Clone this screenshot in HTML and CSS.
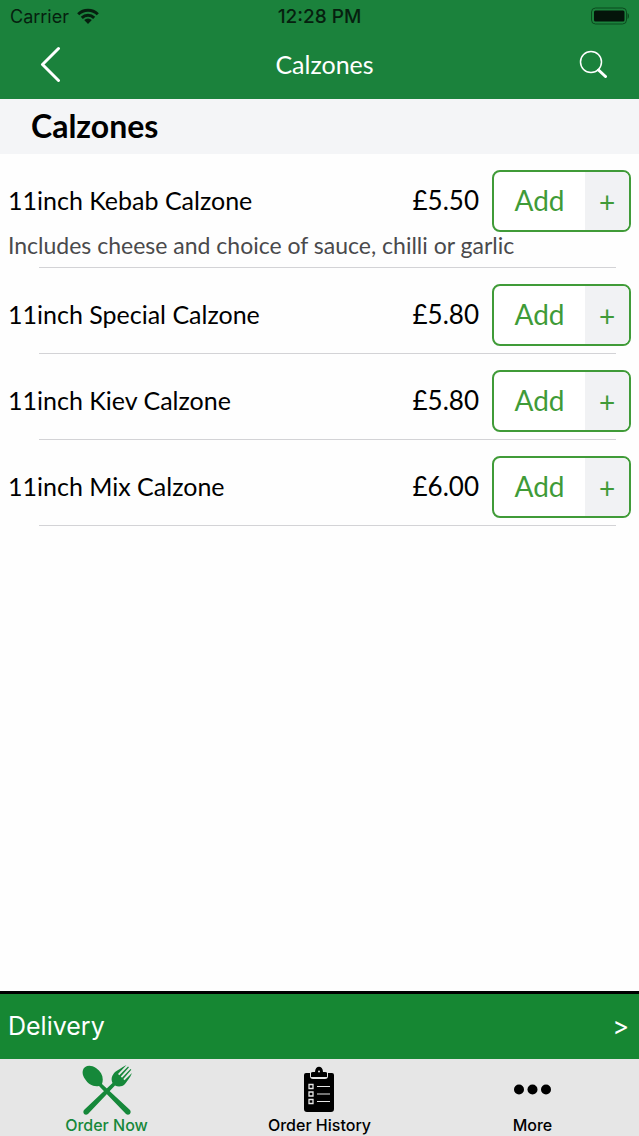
FILE: index.html
```
<!DOCTYPE html>
<html lang="en">

<head>
  <meta charset="UTF-8">
  <meta name="viewport" content="width=device-width, initial-scale=1.0">
  <title>Calzones</title>

  <link rel="stylesheet" href="styles.css">
</head>

<body>

  <header class="top">
    <div class="status">
      <span class="carrier">
        Carrier
        <svg width="22" height="16" viewBox="0 0 22 16" aria-hidden="true">
          <g fill="none" stroke="currentColor" stroke-width="3">
            <path d="M1.2 6.2a14 14 0 0 1 19.6 0" />
            <path d="M4.8 9.8a9 9 0 0 1 12.4 0" />
          </g>
          <path d="M7.2 12a5.5 5.5 0 0 1 7.6 0L11 16z" fill="currentColor" />
        </svg>
      </span>
      <time class="clock">12:28 PM</time>
      <svg class="battery" width="40" height="18" viewBox="0 0 40 18" aria-hidden="true">
        <rect x="2.500" y="1" width="35" height="16" rx="4" fill="none" stroke="#0b4a1e" />
        <rect x="5" y="3.500" width="30.500" height="11" rx="1.500" fill="#04140a" />
        <path d="M38.500 6c2 1 2 5 0 6z" fill="#0b4a1e" />
      </svg>
    </div>

    <nav class="navbar">
      <button class="icon-button" type="button" aria-label="Back">
        <svg width="22" height="36" viewBox="0 0 22 36">
          <path d="M18.500 2.500L2.500 18.500l16 16" fill="none" stroke="#fff" stroke-width="3" stroke-linecap="round" stroke-linejoin="round" />
        </svg>
      </button>
      <span class="title">Calzones</span>
      <button class="icon-button" type="button" aria-label="Search">
        <svg width="28" height="28" viewBox="0 0 28 28">
          <circle cx="12" cy="12" r="10.500" fill="none" stroke="#fff" stroke-width="1.500" />
          <path d="M19.500 20l7 6.500" stroke="#fff" stroke-width="3" stroke-linecap="round" />
        </svg>
      </button>
    </nav>
  </header>

  <main>
    <h1>Calzones</h1>

    <ul class="menu">
      <li>
        <div class="item">
          <span class="name">11inch Kebab Calzone</span>
          <span class="price">£5.50</span>
          <button class="add" type="button"><span>Add</span><span class="plus">+</span></button>
        </div>
        <p>Includes cheese and choice of sauce, chilli or garlic</p>
      </li>
      <li>
        <div class="item">
          <span class="name">11inch Special Calzone</span>
          <span class="price">£5.80</span>
          <button class="add" type="button"><span>Add</span><span class="plus">+</span></button>
        </div>
      </li>
      <li>
        <div class="item">
          <span class="name">11inch Kiev Calzone</span>
          <span class="price">£5.80</span>
          <button class="add" type="button"><span>Add</span><span class="plus">+</span></button>
        </div>
      </li>
      <li>
        <div class="item">
          <span class="name">11inch Mix Calzone</span>
          <span class="price">£6.00</span>
          <button class="add" type="button"><span>Add</span><span class="plus">+</span></button>
        </div>
      </li>
    </ul>
  </main>

  <footer>
    <button class="delivery" type="button"><span>Delivery</span><span class="arrow">&gt;</span></button>

    <nav class="tabs">
      <a class="active" href="#">
        <svg width="50" height="50" viewBox="0 0 50 50" fill="currentColor" aria-hidden="true">
          <path d="M1 5C2 1 8-1 14 3c6 4 8 10 6 16l28 26c2 3-1 6-4 4L17 21C11 22 6 19 3 14 1 11 0 8 1 5z" />
          <path d="M44.500 0L36 9l1.300 1.200L46 1.500l1 .8-8.200 9.200 1.200 1.200L48.500 4l.8.800-8 9.200 1.200 1.200L50 8c-2 5-5 8-7 11-3 3-7 3-10 1.500L6 49c-3 2-6-1-4-4l28.500-27c-2-4-.5-8 2.500-11 3-2 6-4 11.500-7z" />
        </svg>
        Order Now
      </a>
      <a href="#">
        <svg width="50" height="50" viewBox="0 0 50 50" aria-hidden="true">
          <path d="M11 8h4v3q0 3 3 3h12q3 0 3-3V8h4q2 0 2 2v34q0 3-3 3H12q-3 0-3-3V10q0-2 2-2z" />
          <path d="M16 12V8q0-1 2-1h2c0-7 8-7 8 0h2q2 0 2 1v4z" />
          <circle cx="24" cy="6.500" r="1" fill="#e6e6e6" />
          <g fill="none" stroke="#e6e6e6">
            <path d="M14 19.500h4v4h-4zM14 27h4v4h-4zM14 34.500h4v4h-4z" stroke-width="1.300" />
            <path d="M22 21.500h13M22 29h13M22 36.500h13" />
          </g>
        </svg>
        Order History
      </a>
      <a href="#">
        <svg width="50" height="50" viewBox="0 0 50 50" aria-hidden="true">
          <circle cx="11" cy="24.500" r="5" />
          <circle cx="24.500" cy="24.500" r="5" />
          <circle cx="38" cy="24.500" r="5" />
        </svg>
        More
      </a>
    </nav>
  </footer>

</body>

</html>
```
FILE: styles.css
```
* {
  box-sizing: border-box;
}

body {
  display: flex;
  flex-direction: column;
  min-height: 100vh;
  margin: 0;
  background-color: #fefefe;
  color: #000;
  font-family: Lato, "Open Sans", sans-serif;
}

button {
  padding: 0;
  border: none;
  background: none;
  font: inherit;
  cursor: pointer;
}

svg {
  display: block;
}

.top {
  background-color: #1b823c;
}

.status {
  display: grid;
  grid-template-columns: 1fr auto 1fr;
  align-items: center;
  height: 32px;
  padding: 0 10px;
  color: #06200f;
  font-family: Inter, sans-serif;
  font-size: 18px;
}

.carrier {
  display: flex;
  align-items: center;
  gap: 8px;
}

.clock {
  font-size: 19px;
  font-weight: 500;
}

.battery {
  justify-self: end;
}

.navbar {
  display: flex;
  align-items: center;
  justify-content: space-between;
  height: 67px;
  padding: 0 32px 3px 40px;
  color: #fff;
}

.title {
  padding-left: 8px;
  font-size: 25px;
}

h1 {
  margin: 0;
  padding: 0 31px 2px;
  background-color: #f4f5f7;
  font-size: 32px;
  line-height: 53px;
}

.menu {
  margin: 0;
  padding: 0;
  list-style: none;
}

.menu li {
  padding: 16px 8px 0;
}

.menu li::after {
  content: "";
  display: block;
  margin: 7px 15px 0 31px;
  border-bottom: 1px solid #d3d3d6;
}

.item {
  display: flex;
  align-items: center;
  font-size: 25px;
}

.name {
  flex: 1;
}

.price {
  margin-right: 13px;
  font-size: 26px;
}

.name,
.price {
  padding-bottom: 2px;
}

.add {
  display: flex;
  width: 139px;
  height: 62px;
  border: 2px solid #409b38;
  border-radius: 8px;
  overflow: hidden;
  background-color: #fff;
  color: #409b38;
  font-size: 28px;
  line-height: 56px;
}

.add span {
  flex: 1;
}

.add .plus {
  flex: 0 0 44px;
  background-color: #f1f2f4;
  line-height: 60px;
}

.menu p {
  margin: 0;
  padding-bottom: 2px;
  color: #4a4a4c;
  font-size: 23px;
  line-height: 26px;
}

footer {
  margin-top: auto;
}

.delivery {
  display: flex;
  align-items: center;
  justify-content: space-between;
  width: 100%;
  height: 68px;
  padding: 0 10px 2px 8px;
  border-top: 3px solid #000;
  background-color: #168733;
  color: #fff;
  font-family: Inter, sans-serif;
  font-size: 25px;
}

.tabs {
  display: grid;
  grid-template-columns: repeat(3, 1fr);
  height: 77px;
  padding-top: 6px;
  background-color: #e6e6e6;
}

.tabs a {
  display: flex;
  flex-direction: column;
  align-items: center;
  color: #000;
  font-family: Inter, sans-serif;
  font-size: 16px;
  font-weight: 500;
  line-height: 21px;
  text-decoration: none;
}

.tabs .active {
  color: #16883a;
}
```
